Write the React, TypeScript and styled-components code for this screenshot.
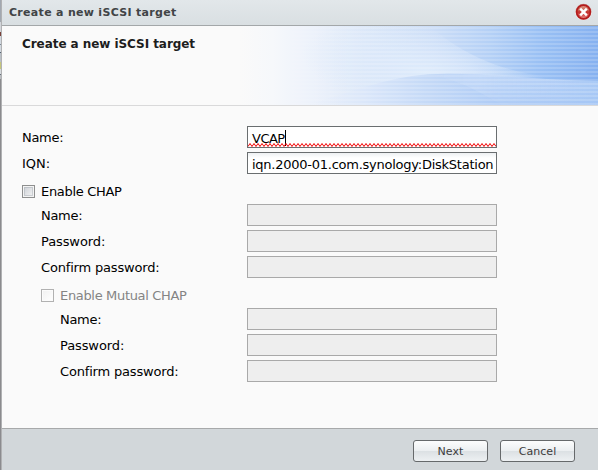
import React from "react";
import styled, { createGlobalStyle } from "styled-components";

const GlobalStyle = createGlobalStyle`
  * { box-sizing: border-box; }
  html, body { margin: 0; padding: 0; overflow: hidden; }
  body { font-family: Verdana, "DejaVu Sans", sans-serif; font-size: 13px; color: #000; }
`;

const Screen = styled.div`
  display: flex;
  width: 598px;
  height: 470px;
`;

const Backdrop = styled.div`
  flex: none;
  width: 2px;
  background: linear-gradient(90deg, transparent 50%, #b0b1b3 50%),
    linear-gradient(#a2a8b0 0 22px, #d3d6da 22px 32px, #7a4038 32px 36px, #d2d8df 36px 44px, #7c8793 44px 45px,
      #d2d8df 45px 52px, #536170 52px 53px, #b9bfc5 53px 62px, #c5c57b 62px 69px, #d6dadd 69px 74px, #656d77 74px 75px,
      #b9bcc0 75px 79px, #8b8b8e 79px);
`;

const Dialog = styled.section`
  display: flex;
  flex-direction: column;
  flex: 1;
  min-width: 0;
  background: #fafafa;
  border-top-left-radius: 3px;
`;

const TitleBar = styled.header`
  display: flex;
  align-items: center;
  justify-content: space-between;
  flex: none;
  height: 26px;
  padding: 1px 6px 0 7px;
  border-bottom: 1px solid #a3a7a9;
  background: linear-gradient(#e2e7ea, #d9dfe2);
`;

const Title = styled.span<{ $size: number; $spacing: number; $color: string }>`
  font-weight: bold;
  font-size: ${(p) => p.$size}px;
  letter-spacing: ${(p) => p.$spacing}px;
  line-height: 16px;
  color: ${(p) => p.$color};
  white-space: nowrap;
`;

const CloseButton = styled.button`
  display: block;
  width: 17px;
  height: 18px;
  margin-top: -2px;
  padding: 0;
  border: 0;
  background: none;
  svg { display: block; }
`;

const Banner = styled.div`
  display: flex;
  flex: none;
  justify-content: space-between;
  height: 80px;
  padding-left: 20px;
  border-bottom: 1px solid #d9d9da;
`;

const BannerTitle = styled.div`
  padding-top: 10px;
`;

const BannerArt = styled.svg`
  display: block;
  flex: none;
  width: 358px;
  height: 79px;
`;

const Form = styled.div`
  flex: 1;
  padding: 20px 0 0 20px;
`;

const Row = styled.div<{ $indent?: number }>`
  display: grid;
  grid-template-columns: ${(p) => 225 - (p.$indent ?? 0)}px 250px;
  height: 26px;
  margin-left: ${(p) => p.$indent ?? 0}px;
`;

const Label = styled.label<{ $spacing?: number; $muted?: boolean }>`
  height: 22px;
  line-height: 24px;
  letter-spacing: ${(p) => p.$spacing ?? 0}px;
  color: ${(p) => (p.$muted ? "#848484" : "#000")};
  white-space: nowrap;
`;

const Field = styled.div<{ $disabled?: boolean; $spacing?: number }>`
  display: flex;
  position: relative;
  height: 22px;
  padding-left: 4px;
  border: 1px solid ${(p) => (p.$disabled ? "#a9a9a9" : "#6a6e70")};
  background: ${(p) => (p.$disabled ? "#eeeeee" : "linear-gradient(#edf0f2, #fff 5px)")};
  line-height: 23px;
  letter-spacing: ${(p) => p.$spacing ?? 0}px;
  white-space: nowrap;
  overflow: hidden;
`;

const FocusedField = styled(Field)`
  background: #fff;
  line-height: 24px;
`;

const Caret = styled.span`
  width: 1px;
  height: 16px;
  margin-top: 3px;
  background: #000;
`;

const Squiggle = styled.svg`
  position: absolute;
  left: 0;
  bottom: 0;
`;

const CheckRow = styled.div<{ $indent?: number }>`
  display: flex;
  align-items: center;
  gap: 6px;
  height: 26px;
  padding-left: ${(p) => p.$indent ?? 0}px;
`;

const Checkbox = styled.span<{ $disabled?: boolean }>`
  width: 13px;
  height: 13px;
  margin-top: 1px;
  border: 1px solid ${(p) => (p.$disabled ? "#b1b1b1" : "#8e8f8f")};
  background: ${(p) => (p.$disabled ? "linear-gradient(135deg, #f0f0f0, #fff)" : "linear-gradient(135deg, #c9cdd3, #f7f7f7)")};
  box-shadow: ${(p) => (p.$disabled ? "inset 0 0 0 1px #fbfbfb" : "inset 0 0 0 1px #f4f4f4, inset 0 0 0 2px rgba(165,170,178,.45)")};
`;

const Footer = styled.footer`
  display: flex;
  justify-content: flex-end;
  gap: 12px;
  flex: none;
  height: 42px;
  padding: 11px 23px 0 0;
  border-top: 1px solid #a7a9aa;
  background: #d2d7da;
`;

const Button = styled.button`
  width: 75px;
  height: 22px;
  padding: 2px 0 0;
  border: 1px solid #66696b;
  border-radius: 3px;
  background: linear-gradient(#fcfdfd, #eceff1 48%, #dce1e4 52%, #edf0f2);
  color: #3c3c3c;
  font: 11px/18px Verdana, "DejaVu Sans", sans-serif;
  letter-spacing: 0.05px;
`;

const CloseIcon = () => (
  <svg width="17" height="18" viewBox="0 0 17 18">
    <defs>
      <linearGradient id="closeFace" x1="0" y1="0" x2="0" y2="1">
        <stop offset="0" stopColor="#dfa090" />
        <stop offset=".38" stopColor="#c9604f" />
        <stop offset=".5" stopColor="#c32d2a" />
        <stop offset="1" stopColor="#e88e8b" />
      </linearGradient>
    </defs>
    <circle cx="8.5" cy="9" r="8.3" fill="#f5e9e8" />
    <circle cx="8.5" cy="8.6" r="7.9" fill="#bb8d8b" />
    <circle cx="8.5" cy="9" r="6.9" fill="url(#closeFace)" stroke="#b51b1b" strokeWidth="1.6" />
    <path d="M5.2 5.7l6.6 6.6M11.8 5.7l-6.6 6.6" stroke="#fff" strokeWidth="2.5" />
  </svg>
);

const WaveArt = () => (
  <BannerArt viewBox="0 0 358 79" preserveAspectRatio="none">
    <defs>
      <linearGradient id="sky" gradientUnits="userSpaceOnUse" x1="0" y1="0" x2="358" y2="0">
        <stop offset="0" stopColor="#fafafa" />
        <stop offset=".09" stopColor="#f6f8fb" />
        <stop offset=".2" stopColor="#edf2fb" />
        <stop offset=".36" stopColor="#dbe7f8" />
        <stop offset=".54" stopColor="#cbddf7" />
        <stop offset=".7" stopColor="#b4d0f6" />
        <stop offset=".84" stopColor="#99c0f4" />
        <stop offset="1" stopColor="#86b1f0" />
      </linearGradient>
      <radialGradient id="glow" gradientUnits="userSpaceOnUse" cx="0" cy="0" r="1" gradientTransform="translate(185 46) rotate(10) scale(125 45)">
        <stop offset="0" stopColor="#e0edfc" stopOpacity=".9" />
        <stop offset=".4" stopColor="#ddeafb" stopOpacity=".65" />
        <stop offset="1" stopColor="#dceafb" stopOpacity="0" />
      </radialGradient>
      <linearGradient id="wave" gradientUnits="userSpaceOnUse" x1="65" y1="0" x2="358" y2="0">
        <stop offset="0" stopColor="#ebf1fb" stopOpacity="0" />
        <stop offset=".2" stopColor="#dbe7fa" />
        <stop offset=".42" stopColor="#c4d9f7" />
        <stop offset=".65" stopColor="#afccf6" />
        <stop offset="1" stopColor="#a4c6f5" />
      </linearGradient>
      <linearGradient id="crest" x1="0" y1="0" x2="1" y2="0">
        <stop offset="0" stopColor="#cddff9" stopOpacity="0" />
        <stop offset=".3" stopColor="#c8dcf9" stopOpacity=".6" />
        <stop offset="1" stopColor="#b2cff7" stopOpacity=".5" />
      </linearGradient>
      <linearGradient id="crestDepth" x1="0" y1="0" x2="0" y2="1">
        <stop offset="0" stopColor="#fff" />
        <stop offset=".3" stopColor="#fff" />
        <stop offset="1" stopColor="#fff" stopOpacity=".1" />
      </linearGradient>
      <mask id="crestMask"><rect y="46" width="358" height="33" fill="url(#crestDepth)" /></mask>
      <pattern id="scan" width="4" height="4" patternUnits="userSpaceOnUse">
        <rect width="4" height="2" y="1" fill="#fff" opacity=".17" />
      </pattern>
      <linearGradient id="fade" x1="0" y1="0" x2="1" y2="0">
        <stop offset="0" stopColor="#fff" stopOpacity="0" />
        <stop offset=".35" stopColor="#fff" />
      </linearGradient>
      <mask id="scanMask"><rect width="358" height="79" fill="url(#fade)" /></mask>
    </defs>
    <rect width="358" height="79" fill="url(#sky)" />
    <path d="M0 0H190C210 18 232 30 256 39C285 49 315 53 358 55V79H0Z" fill="url(#glow)" />
    <path d="M65 79C110 67 133 56 172 50C218 43 283 54 358 55V79Z" fill="url(#wave)" />
    <path d="M185 48.5C225 44 288 54 358 55V79H262C236 64 218 53 185 48.5Z" fill="url(#crest)" mask="url(#crestMask)" />
    <rect width="358" height="79" fill="url(#scan)" mask="url(#scanMask)" />
  </BannerArt>
);

const zigzag = "M0 3.5" + Array.from({ length: 62 }, (_, i) => `L${i * 4 + 2} .5L${i * 4 + 4} 3.5`).join("");

const credentials = [
  { text: "Name:", spacing: -0.3 },
  { text: "Password:", spacing: -0.1 },
  { text: "Confirm password:", spacing: -0.18 },
];

const CredentialRows = ({ indent }: { indent: number }) => (
  <>
    {credentials.map((c) => (
      <Row key={c.text} $indent={indent}>
        <Label $spacing={c.spacing}>{c.text}</Label>
        <Field $disabled />
      </Row>
    ))}
  </>
);

export default function App() {
  return (
    <Screen>
      <GlobalStyle />
      <Backdrop />
      <Dialog>
        <TitleBar>
          <Title $size={11} $spacing={0.3} $color="#414446">Create a new iSCSI target</Title>
          <CloseButton aria-label="Close"><CloseIcon /></CloseButton>
        </TitleBar>
        <Banner>
          <BannerTitle>
            <Title $size={12} $spacing={-0.06} $color="#1d1d1d">Create a new iSCSI target</Title>
          </BannerTitle>
          <WaveArt />
        </Banner>
        <Form>
          <Row>
            <Label $spacing={-0.3}>Name:</Label>
            <FocusedField $spacing={-0.5}>
              VCAP<Caret />
              <Squiggle width="248" height="4" viewBox="0 0 248 4">
                <path d={zigzag} fill="none" stroke="#f00000" strokeWidth="1" />
              </Squiggle>
            </FocusedField>
          </Row>
          <Row>
            <Label>IQN:</Label>
            <Field $spacing={-0.25}>iqn.2000-01.com.synology:DiskStation</Field>
          </Row>
          <CheckRow>
            <Checkbox />
            <Label $spacing={-0.32}>Enable CHAP</Label>
          </CheckRow>
          <CredentialRows indent={19} />
          <CheckRow $indent={19}>
            <Checkbox $disabled />
            <Label $spacing={-0.33} $muted>Enable Mutual CHAP</Label>
          </CheckRow>
          <CredentialRows indent={38} />
        </Form>
        <Footer>
          <Button>Next</Button>
          <Button>Cancel</Button>
        </Footer>
      </Dialog>
    </Screen>
  );
}
